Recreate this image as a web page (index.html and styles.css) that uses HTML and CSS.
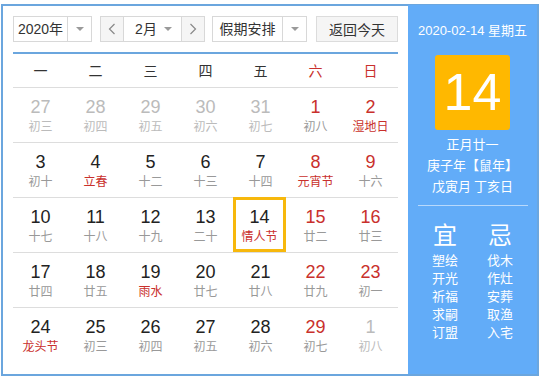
FILE: index.html
```html
<!DOCTYPE html>
<html lang="zh-CN">
<head>
    <meta charset="UTF-8">
    <title>万年历</title>
    <link rel="stylesheet" href="styles.css">
</head>
<body>

    <div class="calendar">
        <div class="main">
            <!-- toolbar -->
            <div class="toolbar">
                <div class="select year-select">
                    <span class="select-text">2020年</span>
                    <span class="select-arrow"><i class="tri"></i></span>
                </div>
                <div class="month-group">
                    <span class="nav-btn">
                        <svg width="8" height="12" viewBox="0 0 8 12"><polyline points="6.5,1 1.5,6 6.5,11" fill="none" stroke="#888" stroke-width="1.2"/></svg>
                    </span>
                    <div class="month-select">
                        <span class="select-text">2月</span>
                        <i class="tri"></i>
                    </div>
                    <span class="nav-btn">
                        <svg width="8" height="12" viewBox="0 0 8 12"><polyline points="1.5,1 6.5,6 1.5,11" fill="none" stroke="#888" stroke-width="1.2"/></svg>
                    </span>
                </div>
                <div class="select holiday-select">
                    <span class="select-text">假期安排</span>
                    <span class="select-arrow"><i class="tri"></i></span>
                </div>
                <button class="today-btn">返回今天</button>
            </div>

            <!-- weekday header -->
            <div class="week-head">
                <span>一</span><span>二</span><span>三</span><span>四</span><span>五</span>
                <span class="weekend">六</span><span class="weekend">日</span>
            </div>

            <!-- days -->
            <div class="week-row">
                <div class="day other"><b>27</b><em>初三</em></div>
                <div class="day other"><b>28</b><em>初四</em></div>
                <div class="day other"><b>29</b><em>初五</em></div>
                <div class="day other"><b>30</b><em>初六</em></div>
                <div class="day other"><b>31</b><em>初七</em></div>
                <div class="day weekend"><b>1</b><em>初八</em></div>
                <div class="day weekend"><b>2</b><em class="fest">湿地日</em></div>
            </div>
            <div class="week-row">
                <div class="day"><b>3</b><em>初十</em></div>
                <div class="day"><b>4</b><em class="fest">立春</em></div>
                <div class="day"><b>5</b><em>十二</em></div>
                <div class="day"><b>6</b><em>十三</em></div>
                <div class="day"><b>7</b><em>十四</em></div>
                <div class="day weekend"><b>8</b><em class="fest">元宵节</em></div>
                <div class="day weekend"><b>9</b><em>十六</em></div>
            </div>
            <div class="week-row">
                <div class="day"><b>10</b><em>十七</em></div>
                <div class="day"><b>11</b><em>十八</em></div>
                <div class="day"><b>12</b><em>十九</em></div>
                <div class="day"><b>13</b><em>二十</em></div>
                <div class="day selected"><b>14</b><em class="fest">情人节</em></div>
                <div class="day weekend"><b>15</b><em>廿二</em></div>
                <div class="day weekend"><b>16</b><em>廿三</em></div>
            </div>
            <div class="week-row">
                <div class="day"><b>17</b><em>廿四</em></div>
                <div class="day"><b>18</b><em>廿五</em></div>
                <div class="day"><b>19</b><em class="fest">雨水</em></div>
                <div class="day"><b>20</b><em>廿七</em></div>
                <div class="day"><b>21</b><em>廿八</em></div>
                <div class="day weekend"><b>22</b><em>廿九</em></div>
                <div class="day weekend"><b>23</b><em>初一</em></div>
            </div>
            <div class="week-row last">
                <div class="day"><b>24</b><em class="fest">龙头节</em></div>
                <div class="day"><b>25</b><em>初三</em></div>
                <div class="day"><b>26</b><em>初四</em></div>
                <div class="day"><b>27</b><em>初五</em></div>
                <div class="day"><b>28</b><em>初六</em></div>
                <div class="day weekend"><b>29</b><em>初七</em></div>
                <div class="day other"><b>1</b><em>初八</em></div>
            </div>
        </div>

        <!-- side panel -->
        <div class="side">
            <div class="side-date">2020-02-14 星期五</div>
            <div class="big-day">14</div>
            <div class="lunar-info">
                <div>正月廿一</div>
                <div>庚子年【鼠年】</div>
                <div>戊寅月 丁亥日</div>
            </div>
            <div class="side-line"></div>
            <div class="yiji">
                <div class="yiji-col">
                    <div class="yiji-title">宜</div>
                    <div>塑绘</div>
                    <div>开光</div>
                    <div>祈福</div>
                    <div>求嗣</div>
                    <div>订盟</div>
                </div>
                <div class="yiji-col">
                    <div class="yiji-title">忌</div>
                    <div>伐木</div>
                    <div>作灶</div>
                    <div>安葬</div>
                    <div>取渔</div>
                    <div>入宅</div>
                </div>
            </div>
        </div>
    </div>

</body>
</html>
```

FILE: styles.css
```css
body {
    margin: 0;
    background-color: #ffffff;
    font-family: "Liberation Sans", "Noto Sans CJK SC", sans-serif;
    color: #333333;
}

.calendar {
    display: flex;
    box-sizing: border-box;
    width: 538px;
    height: 372px;
    margin: 4px 0 0 1px;
    border: 2px solid #6ba6de;
}

.main {
    width: 385px;
    padding: 10px 10px 0 10px;
    background-color: #ffffff;
}

/* toolbar */
.toolbar {
    display: flex;
    height: 26px;
    font-size: 14px;
}

.select {
    display: flex;
    box-sizing: border-box;
    height: 26px;
    border: 1px solid #d8d8d8;
    background-color: #ffffff;
}

.select-text {
    flex: 1;
    line-height: 24px;
    text-align: center;
}

.select-arrow {
    display: flex;
    align-items: center;
    justify-content: center;
    width: 23px;
    border-left: 1px solid #d8d8d8;
}

.tri {
    width: 0;
    height: 0;
    border-left: 4px solid transparent;
    border-right: 4px solid transparent;
    border-top: 4px solid #9a9a9a;
}

.year-select {
    width: 79px;
}

.month-group {
    display: flex;
    box-sizing: border-box;
    width: 105px;
    height: 26px;
    margin-left: 8px;
    border: 1px solid #d8d8d8;
}

.nav-btn {
    display: flex;
    align-items: center;
    justify-content: center;
    width: 22px;
    background-color: #f5f5f5;
}

.month-select {
    display: flex;
    align-items: center;
    width: 59px;
    padding-right: 9px;
    box-sizing: border-box;
    border-left: 1px solid #d8d8d8;
    border-right: 1px solid #d8d8d8;
    background-color: #ffffff;
}

.month-select .select-text {
    padding-left: 4px;
}

.holiday-select {
    width: 95px;
    margin-left: 7px;
}

.today-btn {
    box-sizing: border-box;
    width: 82px;
    height: 26px;
    margin-left: 9px;
    padding: 0;
    border: 1px solid #dcdcdc;
    background-color: #f5f5f5;
    font-family: "Liberation Sans", "Noto Sans CJK SC", sans-serif;
    font-size: 14px;
    color: #333333;
}

/* weekday header */
.week-head {
    display: grid;
    grid-template-columns: repeat(7, 55px);
    height: 33px;
    margin-top: 10px;
    border-top: 2px solid #6ba6de;
    border-bottom: 1px solid #dddddd;
    font-size: 14px;
    line-height: 33px;
    text-align: center;
    font-family: "Noto Sans CJK SC", sans-serif;
}

.week-head .weekend {
    color: #c9302c;
}

/* day rows */
.week-row {
    display: grid;
    grid-template-columns: repeat(7, 55px);
    box-sizing: border-box;
    height: 55px;
    border-bottom: 1px solid #dddddd;
}

.week-row.last {
    border-bottom: none;
}

.day {
    display: flex;
    flex-direction: column;
    align-items: center;
    padding-top: 9px;
    box-sizing: border-box;
}

.day b {
    font-weight: normal;
    font-size: 18px;
    line-height: 20px;
    color: #222222;
}

.day em {
    font-style: normal;
    font-size: 12px;
    line-height: 18px;
    color: #999999;
    font-family: "Noto Sans CJK SC", sans-serif;
}

.day.weekend b {
    color: #c9302c;
}

.day em.fest {
    color: #c9302c;
}

.day.other b,
.day.other em {
    color: #bbbbbb;
}

.day.selected {
    width: 53px;
    margin-top: -1px;
    padding-top: 10px;
    box-shadow: inset 0 0 0 3px #f7b80c;
}

/* side panel */
.side {
    flex: 1;
    display: flex;
    flex-direction: column;
    align-items: center;
    margin-top: -1px;
    background-color: #62acf8;
    color: #ffffff;
}

.side-date {
    margin-top: 17px;
    font-size: 13px;
    line-height: 18px;
}

.big-day {
    width: 75px;
    height: 75px;
    margin-top: 15px;
    border-radius: 3px;
    background-color: #ffb800;
    font-size: 52px;
    line-height: 75px;
    text-align: center;
}

.lunar-info {
    margin-top: 3px;
    font-size: 13px;
    line-height: 21px;
    text-align: center;
    font-family: "Noto Sans CJK SC", sans-serif;
}

.side-line {
    width: 110px;
    height: 1px;
    margin-top: 9px;
    background-color: rgba(255, 255, 255, 0.55);
}

.yiji {
    display: flex;
    width: 110px;
    margin-top: 13px;
    font-size: 13px;
    line-height: 18px;
    font-family: "Noto Sans CJK SC", sans-serif;
}

.yiji-col {
    flex: 1;
    text-align: center;
}

.yiji-title {
    font-size: 24px;
    line-height: 30px;
    margin-bottom: 2px;
}
```
